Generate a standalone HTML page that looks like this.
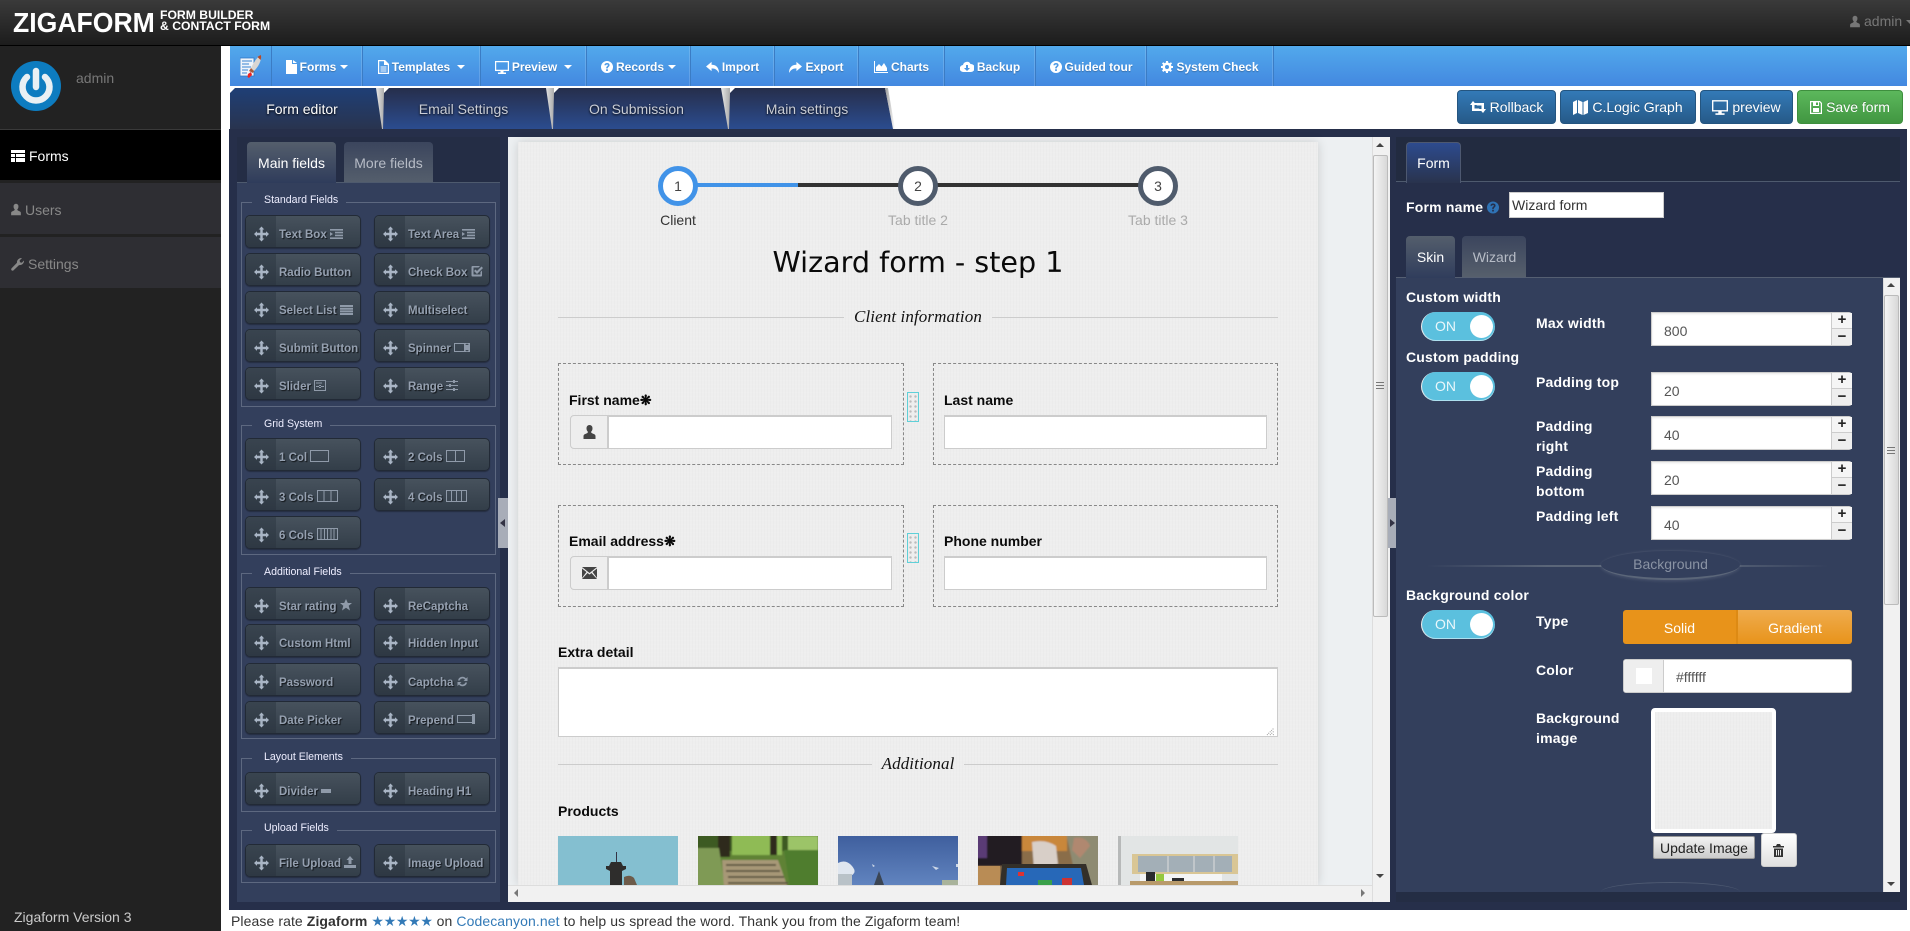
<!DOCTYPE html>
<html lang="en"><head><meta charset="utf-8"><title>Zigaform</title>
<style>
*{box-sizing:border-box}
html,body{margin:0;padding:0;width:1910px;height:931px;overflow:hidden;background:#fff;font-family:"Liberation Sans",sans-serif;font-size:14px;color:#333}
div.p{position:absolute}
svg{display:inline-block;fill:currentColor}
svg.o{fill:none;stroke:currentColor}
.t{position:absolute;white-space:nowrap;line-height:16px}
.side{position:absolute;left:0;width:221px}
.nav{position:absolute;top:46px;height:40px;padding-top:2px;display:flex;align-items:center;justify-content:center;gap:3px;color:#fff;font-weight:bold;font-size:12px;border-right:1px solid #3b7cc4;box-shadow:inset -1px 0 0 rgba(255,255,255,.15);text-shadow:0 1px 1px rgba(0,0,0,.25)}
.caret{display:inline-block;border-left:4px solid transparent;border-right:4px solid transparent;border-top:4px solid #fff;margin-left:1px}
.tab{position:absolute;top:88px;height:41px;color:#c9cdd6;text-align:center;line-height:42px;padding-right:9px;text-shadow:0 1px 2px #000;background:linear-gradient(#262e4b,#2b4c8f)}
.tb{position:absolute;top:90px;height:34px;border-radius:4px;color:#fff;display:flex;align-items:center;justify-content:center;gap:4px;background:linear-gradient(#337ab7,#265a88);border:1px solid #245580;text-shadow:0 -1px 0 rgba(0,0,0,.2)}
.tb.g{background:linear-gradient(#5cb85c,#419641);border-color:#3e8f3e}
.fs{position:absolute;left:241px;width:255px;border:1px solid #5d6880}
.lg{position:absolute;left:252px;background:#333f5c;color:#eef;font-size:10.6px;line-height:14px;padding:0 8px 0 12px;white-space:nowrap}
.b{position:absolute;width:116px;height:33px;border-radius:5px;border:1px solid #222a36;background:linear-gradient(#47525d,#333e49);box-shadow:0 1px 1px rgba(0,0,0,.3);color:#95a0b0;font-weight:bold;font-size:11.5px;line-height:33px;overflow:hidden;white-space:nowrap;text-shadow:1px 1px 1px rgba(0,0,0,.7)}
.b:before{content:"";position:absolute;left:0;top:0;bottom:0;width:30px;background:linear-gradient(#39444f,#2e3843)}
.b .m{position:absolute;left:8px;top:10px;width:15px;height:16px;color:#a9b5c5}
.b .x{position:absolute;left:33px;top:3px}
.b .x svg{vertical-align:-1px;color:#8f9aa9}
.c1{left:245px}.c2{left:374px}
.lb{position:absolute;font-weight:bold;font-size:14px;line-height:16px;color:#0a0a0a;white-space:nowrap}
.dash{position:absolute;border:1px dashed #888}
.in{position:absolute;background:#fff;border:1px solid #ccc;border-top-width:2px;height:34px}
.ad{position:absolute;background:#eee;border:1px solid #ccc;border-right-width:2px;border-radius:4px 0 0 4px;width:39px;height:34px;display:flex;align-items:center;justify-content:center;color:#444}
.hd{position:absolute;left:907px;width:12px;height:30px;border:1px solid #5fd0d8;background:radial-gradient(circle,#bbb 1px,transparent 1.4px) 0 1px/5px 5px}
.w{position:absolute;color:#fff;font-weight:bold;font-size:14px;line-height:20px;letter-spacing:.2px;white-space:nowrap}
.tg{position:absolute;left:1421px;width:74px;height:29px;border-radius:15px;background:#5bc0de;color:#eaf7fb;line-height:29px;font-size:14px;padding-left:13px;border-left:1px solid #eee;box-shadow:inset 0 -1px 0 rgba(255,255,255,.5)}
.tg:after{content:"";position:absolute;left:48px;top:3px;width:23px;height:23px;border-radius:50%;background:#fff}
.ni{position:absolute;left:1651px;width:201px;height:34px;background:#fff;border-radius:0 3px 3px 0;border:1px solid #ccc;color:#555;line-height:36px;padding-left:12px;box-shadow:inset 0 1px 2px rgba(0,0,0,.1)}
.ni i{position:absolute;left:179px;top:0;width:21px;height:16px;border-left:1px solid #ccc;border-bottom:1px solid #ccc;background:#f5f5f5;font-style:normal;color:#222;font-weight:bold;line-height:14px;text-align:center;font-size:15px;padding:0}
.ni b{position:absolute;left:179px;top:16px;width:21px;height:16px;border-left:1px solid #ccc;background:#eee;color:#222;line-height:15px;text-align:center;font-size:15px}
.sb{position:absolute;background:#f1f1f1}
.th{position:absolute;background:linear-gradient(90deg,#f4f4f4,#d8d8d8);border:1px solid #bbb;border-radius:2px}
.tex{background-color:#eee;background-image:repeating-linear-gradient(90deg,rgba(0,0,0,.01) 0 1px,transparent 1px 3px),repeating-linear-gradient(0deg,rgba(255,255,255,.06) 0 1px,transparent 1px 4px)}
.ph{position:absolute;top:836px;width:120px;height:49px;overflow:hidden}
</style></head><body>

<svg width="0" height="0" style="position:absolute">
<defs><filter id="bl" x="-5%" y="-5%" width="110%" height="110%"><feGaussianBlur stdDeviation=".9"/></filter></defs>
<symbol id="mv" viewBox="0 0 16 16"><path d="M8 0l3 3.2H9.3V6.7h3.5V5L16 8l-3.2 3V9.3H9.3v3.5H11L8 16l-3-3.2h1.7V9.3H3.2V11L0 8l3.2-3v1.7h3.500V3.200H5z"/></symbol>
<symbol id="usr" viewBox="0 0 12 16"><path d="M6 1a3 3 0 0 1 3 3.400C9 6 8.400 7 7.600 7.800c0 1 .4 1.300 2 2 1.500.6 2.400 1 2.400 2.400V15H0v-2.800c0-1.400 .9-1.800 2.400-2.400 1.600-.7 2-1 2-2C3.600 7 3 6 3 4.400A3 3 0 0 1 6 1z"/></symbol>
<symbol id="ind" viewBox="0 0 13 10"><path d="M0 0h13v1.600H0zM5 2.800h8v1.600H5zM5 5.600h8v1.600H5zM0 8.400h13V10H0zM0 3l3 2-3 2z"/></symbol>
<symbol id="lst" viewBox="0 0 13 10"><path d="M0 0h13v2H0zM0 2.700h13v2H0zM0 5.400h13v2H0zM0 8h13v2H0z"/></symbol>
<symbol id="q" viewBox="0 0 14 14"><path fill-rule="evenodd" d="M7 0a7 7 0 1 1 0 14A7 7 0 0 1 7 0zM6 9.600v2h2v-2zM7 2.400C5.200 2.400 4 3.400 4 5h2c0-.6.4-.9 1-.9s1 .3 1 .8c0 1-2 1.200-2 3.700h2c0-1.800 2-1.800 2-3.900C10 3.300 8.800 2.400 7 2.400z"/></symbol>
</svg>

<!-- Top bar -->
<div class="p" style="left:0;top:0;width:1910px;height:46px;background:linear-gradient(#3a3a3a,#1c1c1c);border-bottom:1px solid #000"></div>
<div class="t" style="left:13px;top:7px;font-size:28px;line-height:32px;font-weight:bold;color:#fff;transform:scaleX(.95);transform-origin:0 0">ZIGAFORM</div>
<div class="t" style="left:160px;top:9px;font-size:12.2px;line-height:13px;font-weight:bold;color:#fff">FORM BUILDER</div>
<div class="t" style="left:160px;top:20px;font-size:12.2px;line-height:13px;font-weight:bold;color:#fff">&amp; CONTACT FORM</div>
<svg style="position:absolute;left:1850px;top:15px;color:#777" width="10" height="13"><use href="#usr"/></svg>
<div class="t" style="left:1864px;top:13px;color:#777">admin</div>
<div class="p" style="left:1906px;top:20px;border-left:4px solid transparent;border-right:4px solid transparent;border-top:4px solid #777"></div>

<!-- Sidebar -->
<div class="side" style="top:46px;height:885px;background:#222"></div>
<div class="side" style="top:129px;height:1px;background:#3a3a3a"></div>
<svg style="position:absolute;left:11px;top:61px" width="50" height="50" viewBox="0 0 50 50"><circle cx="25" cy="25" r="25" fill="#0d7cc0"/><path d="M16 16a13.500 13.500 0 1 0 18 0" fill="none" stroke="#e9f0f4" stroke-width="6.500" stroke-linecap="round"/><path d="M25 10v16" stroke="#e9f0f4" stroke-width="6.500" stroke-linecap="round"/></svg>
<div class="t" style="left:76px;top:70px;color:#777">admin</div>
<div class="side" style="top:130px;height:50px;background:#000"></div>
<svg style="position:absolute;left:11px;top:150px;fill:#fff" width="14" height="12"><path d="M0 0h14v12H0z"/><path d="M0 3.500h14M0 7.500h14M4.500 3v9" stroke="#000" stroke-width="1"/></svg>
<div class="t" style="left:29px;top:148px;color:#fff">Forms</div>
<div class="side" style="top:183px;height:51px;background:#2e2e33"></div>
<svg style="position:absolute;left:11px;top:203px;color:#888" width="10" height="13"><use href="#usr"/></svg>
<div class="t" style="left:25px;top:202px;color:#888">Users</div>
<div class="side" style="top:237px;height:51px;background:#2e2e33"></div>
<svg style="position:absolute;left:11px;top:257px;fill:#888" width="13" height="14" viewBox="0 0 13 14"><path d="M1 13.500C0 13 0 12 .6 11.300L6 5.800C5.600 3.500 7.800.6 11 1L8.600 3.500l.4 1.800 1.800.5L13 3.500C13.300 6.500 10.600 8.500 8 8.100L2.600 13.300C2.100 13.800 1.500 13.900 1 13.500z"/></svg>
<div class="t" style="left:28px;top:256px;color:#888">Settings</div>
<div class="t" style="left:14px;top:909px;color:#ccc">Zigaform Version 3</div>

<!-- Blue nav -->
<div class="p" style="left:230px;top:46px;width:1677px;height:40px;background:linear-gradient(#52a9ec,#4388e0)"></div>
<svg style="position:absolute;left:240px;top:55px" width="22" height="23" viewBox="0 0 22 23"><path d="M0 3h14v18H0z" fill="#eef4fb" stroke="#2e76c2" stroke-width=".8"/><path d="M2 6h10M2 9h7M2 12h9M2 15h6M2 18h5" stroke="#5d9ad9" stroke-width="1.200"/><path d="M21 0c.6 5-2 11-7 16l-3-3C14 7 17 2 21 0z" fill="#d9d6d3"/><path d="M21 0c.4 2.200 0 3.800-.5 5l-3-3C18.500 1.200 19.800.4 21 0z" fill="#b24a2a"/><path d="M11 13l3 3-1 2-4-2z" fill="#a65b3d"/><path d="M8 19l3-2 1 3-3 3-1.500-1z" fill="#e22"/></svg>
<div class="p" style="left:271px;top:46px;width:1px;height:40px;background:#3b7cc4"></div>
<div class="nav" style="left:272px;width:91px"><svg width="11" height="14" viewBox="0 0 11 14"><path d="M0 0h6v4h5v10H0zM7 0l4 3H7z"/></svg><span>Forms</span><span class="caret"></span></div>
<div class="nav" style="left:363px;width:118px"><svg width="11" height="14" viewBox="0 0 11 14"><path fill-rule="evenodd" d="M0 0h7l4 4v10H0zM1.200 1.200v11.600h8.600V5H6V1.200zM2.500 6.500h6v1h-6zM2.500 8.500h6v1h-6zM2.500 10.500h6v1h-6z"/></svg><span>Templates</span><span class="caret" style="margin-left:4px"></span></div>
<div class="nav" style="left:481px;width:106px"><svg width="14" height="13" viewBox="0 0 14 13"><path fill-rule="evenodd" d="M0 0h14v10H8.500v1.500H11V13H3v-1.500h2.500V10H0zM1.200 1.200v7.600h11.600V1.200z"/></svg><span>Preview</span><span class="caret" style="margin-left:4px"></span></div>
<div class="nav" style="left:587px;width:104px"><svg width="12" height="12"><use href="#q"/></svg><span>Records</span><span class="caret"></span></div>
<div class="nav" style="left:691px;width:84px"><svg width="13" height="12" viewBox="0 0 14 13"><path d="M6 1L0 6l6 5V8c4 0 6 1.500 8 5 0-6-3-9-8-9z"/></svg><span>Import</span></div>
<div class="nav" style="left:775px;width:84px"><svg width="13" height="12" viewBox="0 0 14 13"><path d="M8 1l6 5-6 5V8C4 8 2 9.500 0 13 0 7 3 4 8 4z"/></svg><span>Export</span></div>
<div class="nav" style="left:859px;width:86px"><svg width="14" height="12" viewBox="0 0 14 12"><path d="M0 0h1v11h13v1H0zM2 10V6l3-3 2.500 2.500L10 2l3 5v3z"/></svg><span>Charts</span></div>
<div class="nav" style="left:945px;width:91px"><svg width="14" height="12" viewBox="0 0 14 12"><path fill-rule="evenodd" d="M3.500 11A3.500 3.500 0 0 1 3 4a4 4 0 0 1 7.500-1A4 4 0 0 1 11 11zM6 4v3H4l3 3 3-3H8V4z"/></svg><span>Backup</span></div>
<div class="nav" style="left:1036px;width:111px"><svg width="12" height="12"><use href="#q"/></svg><span>Guided tour</span></div>
<div class="nav" style="left:1147px;width:127px"><svg width="12" height="12" viewBox="0 0 12 12"><path fill-rule="evenodd" d="M5 0h2l.3 1.700 1.300.5L10 1.200 11 2.500 9.900 3.800l.5 1.200H12v2h-1.600l-.5 1.300L11 9.500 9.500 11 8.300 9.900 7 10.400 7 12H5l-.2-1.600-1.300-.5L2.300 11 1 9.500l1-1.200L1.600 7H0V5h1.600l.5-1.200L1 2.500 2.300 1.200 3.500 2.200l1.300-.5zM6 4a2 2 0 1 0 0 4 2 2 0 0 0 0-4z"/></svg><span>System Check</span></div>

<!-- Main tabs -->
<div class="p" style="left:230px;top:88px;width:660px;height:41px;background:linear-gradient(90deg,transparent 145px,#f0f0f0 145px,#aaa 154px,transparent 154px,transparent 314px,#f0f0f0 314px,#aaa 324px,transparent 324px,transparent 490px,#f0f0f0 490px,#aaa 500px,transparent 500px)"></div>
<div class="tab" style="left:230px;width:153px;color:#fff;background:linear-gradient(#1f3f76,#29344f);clip-path:polygon(0 5px,5px 0,146px 0,152px 41px,0 41px)">Form editor</div>
<div class="tab" style="left:383px;width:170px;clip-path:polygon(1px 5px,6px 0,163px 0,169px 41px,0 41px)">Email Settings</div>
<div class="tab" style="left:553px;width:176px;clip-path:polygon(1px 5px,6px 0,168px 0,175px 41px,0 41px)">On Submission</div>
<div class="tab" style="left:729px;width:165px;clip-path:polygon(1px 5px,6px 0,156px 0,164px 41px,0 41px)">Main settings</div>
<div class="p" style="left:885px;top:88px;width:10px;height:41px;background:linear-gradient(90deg,#999,transparent);clip-path:polygon(0 0,3px 0,10px 41px,8px 41px);z-index:0"></div>

<div class="tb" style="left:1457px;width:99px"><svg width="16" height="12" viewBox="0 0 16 12"><path d="M3 0l3.500 4H4.500v3.500H9l2.500 2.500H2V4H0zM4.500 2H14v6h2l-3 4-3.500-4h2V4.500H7z"/></svg><span>Rollback</span></div>
<div class="tb" style="left:1560px;width:136px"><svg width="15" height="15" viewBox="0 0 15 15"><path d="M0 2l4-2v13l-4 2zM5 0l4.500 2v13L5 13zM10.500 2L15 0v13l-4.500 2z"/></svg><span>C.Logic Graph</span></div>
<div class="tb" style="left:1700px;width:93px"><svg width="16" height="15" viewBox="0 0 14 13"><path fill-rule="evenodd" d="M0 0h14v10H8.500v1.500H11V13H3v-1.500h2.500V10H0zM1.200 1.200v7.600h11.600V1.200z"/></svg><span>preview</span></div>
<div class="tb g" style="left:1797px;width:106px"><svg width="12" height="13" viewBox="0 0 12 13"><path fill-rule="evenodd" d="M0 0h10l2 2v11H0zM1.200 1.200v10.600h9.600V2.600L9.800 1.200H9V5H3V1.200zM6 1.500v2.500h2V1.500zM3 7h6v4H3z"/></svg><span>Save form</span></div>

<!-- Workspace -->
<div class="p" style="left:229px;top:129px;width:1681px;height:781px;background:#262f4a"></div>
<div class="p" style="left:1907px;top:46px;width:3px;height:865px;background:#fff"></div>
<div class="p" style="left:237px;top:137px;width:263px;height:45px;background:#242d45"></div>
<div class="p" style="left:237px;top:182px;width:263px;height:720px;background:#333f5c;border-top:1px solid #4e5a6e"></div>
<div class="t" style="left:247px;top:142px;width:89px;height:41px;border-radius:4px 4px 0 0;background:linear-gradient(#545e6c,#2f3c5b);color:#fff;text-align:center;line-height:42px;z-index:1">Main fields</div>
<div class="t" style="left:344px;top:142px;width:89px;height:40px;border-radius:4px 4px 0 0;background:linear-gradient(#3b455d,#545e6c);color:#b7bcc6;text-align:center;line-height:42px">More fields</div>

<!-- Standard -->
<div class="fs" style="top:202px;height:205px"></div><div class="lg" style="top:193px">Standard Fields</div>
<div class="b c1" style="top:215px"><svg class="m"><use href="#mv"/></svg><span class="x">Text Box <svg width="13" height="10"><use href="#ind"/></svg></span></div>
<div class="b c2" style="top:215px"><svg class="m"><use href="#mv"/></svg><span class="x">Text Area <svg width="13" height="10"><use href="#ind"/></svg></span></div>
<div class="b c1" style="top:253px"><svg class="m"><use href="#mv"/></svg><span class="x">Radio Button</span></div>
<div class="b c2" style="top:253px"><svg class="m"><use href="#mv"/></svg><span class="x">Check Box <svg width="12" height="12" viewBox="0 0 12 12"><path fill-rule="evenodd" d="M1.500 1H9L7.500 2.500H2.500v7h7V7L11 5.500V10.500a1 1 0 0 1-1 1H1.500a1 1 0 0 1-1-1V2a1 1 0 0 1 1-1zM10.500 1.500L12 3 6 9 3 6l1.500-1.500L6 6z"/></svg></span></div>
<div class="b c1" style="top:291px"><svg class="m"><use href="#mv"/></svg><span class="x">Select List <svg width="13" height="10"><use href="#lst"/></svg></span></div>
<div class="b c2" style="top:291px"><svg class="m"><use href="#mv"/></svg><span class="x">Multiselect</span></div>
<div class="b c1" style="top:329px"><svg class="m"><use href="#mv"/></svg><span class="x">Submit Button</span></div>
<div class="b c2" style="top:329px"><svg class="m"><use href="#mv"/></svg><span class="x">Spinner <svg width="16" height="11" viewBox="0 0 16 11"><path fill-rule="evenodd" d="M0 1h16v9H0zM1 2v7h9V2zM11 3h4l-2-1.500zM11 8h4l-2 1.500z"/></svg></span></div>
<div class="b c1" style="top:367px"><svg class="m"><use href="#mv"/></svg><span class="x">Slider <svg width="12" height="11" viewBox="0 0 12 11"><path fill-rule="evenodd" d="M0 0h12v11H0zM1 1v9h10V1zM2 2.500h6v1H2zM2 6h8v1H2zM5 5h2v3H5z"/></svg></span></div>
<div class="b c2" style="top:367px"><svg class="m"><use href="#mv"/></svg><span class="x">Range <svg width="12" height="11" viewBox="0 0 12 11"><path d="M0 1h12v1H0zM0 5h12v1H0zM0 9h12v1H0zM7 0h2v3H7zM3 4h2v3H3zM7 8h2v3H7z"/></svg></span></div>

<!-- Grid -->
<div class="fs" style="top:425px;height:130px"></div><div class="lg" style="top:417px">Grid System</div>
<div class="b c1" style="top:438px"><svg class="m"><use href="#mv"/></svg><span class="x">1 Col <svg class="o" width="19" height="12" viewBox="0 0 19 12"><path d="M.5.500h18v11H.5z"/></svg></span></div>
<div class="b c2" style="top:438px"><svg class="m"><use href="#mv"/></svg><span class="x">2 Cols <svg class="o" width="19" height="12" viewBox="0 0 19 12"><path d="M.5.500h18v11H.5zM9.500.500v11"/></svg></span></div>
<div class="b c1" style="top:478px"><svg class="m"><use href="#mv"/></svg><span class="x">3 Cols <svg class="o" width="21" height="12" viewBox="0 0 21 12"><path d="M.5.500h20v11H.5zM7 .500v11M14 .500v11"/></svg></span></div>
<div class="b c2" style="top:478px"><svg class="m"><use href="#mv"/></svg><span class="x">4 Cols <svg class="o" width="21" height="12" viewBox="0 0 21 12"><path d="M.5.500h20v11H.5zM5.500.500v11M10.500.500v11M15.500.500v11"/></svg></span></div>
<div class="b c1" style="top:516px"><svg class="m"><use href="#mv"/></svg><span class="x">6 Cols <svg class="o" width="21" height="12" viewBox="0 0 21 12"><path d="M.5.500h20v11H.5zM4 .500v11M7.500.500v11M10.500.500v11M14 .500v11M17 .500v11"/></svg></span></div>

<!-- Additional -->
<div class="fs" style="top:573px;height:166px"></div><div class="lg" style="top:565px">Additional Fields</div>
<div class="b c1" style="top:587px"><svg class="m"><use href="#mv"/></svg><span class="x">Star rating <svg width="12" height="12" viewBox="0 0 12 12"><path d="M6 0l1.800 4H12L8.700 6.800 10 11.500 6 8.800 2 11.500 3.300 6.800 0 4h4.200z"/></svg></span></div>
<div class="b c2" style="top:587px"><svg class="m"><use href="#mv"/></svg><span class="x">ReCaptcha</span></div>
<div class="b c1" style="top:624px"><svg class="m"><use href="#mv"/></svg><span class="x">Custom Html</span></div>
<div class="b c2" style="top:624px"><svg class="m"><use href="#mv"/></svg><span class="x">Hidden Input</span></div>
<div class="b c1" style="top:663px"><svg class="m"><use href="#mv"/></svg><span class="x">Password</span></div>
<div class="b c2" style="top:663px"><svg class="m"><use href="#mv"/></svg><span class="x">Captcha <svg width="11" height="11" viewBox="0 0 11 11"><path d="M1 4.500A4.500 4.500 0 0 1 9 2.500L10.500 1v4h-4L8 3.700A3 3 0 0 0 2.700 4.500zM10 6.500A4.500 4.500 0 0 1 2 8.500L.5 10V6h4L3 7.300A3 3 0 0 0 8.300 6.500z"/></svg></span></div>
<div class="b c1" style="top:701px"><svg class="m"><use href="#mv"/></svg><span class="x">Date Picker</span></div>
<div class="b c2" style="top:701px"><svg class="m"><use href="#mv"/></svg><span class="x">Prepend <svg class="o" width="19" height="12" viewBox="0 0 19 12"><path d="M.5 2.500h16v7H.5z"/><path d="M16.500 1v10" stroke-width="3"/></svg></span></div>

<!-- Layout -->
<div class="fs" style="top:758px;height:54px"></div><div class="lg" style="top:750px">Layout Elements</div>
<div class="b c1" style="top:772px"><svg class="m"><use href="#mv"/></svg><span class="x">Divider <svg width="10" height="4" viewBox="0 0 10 4" style="vertical-align:2px"><path d="M0 0h10v4H0z"/></svg></span></div>
<div class="b c2" style="top:772px"><svg class="m"><use href="#mv"/></svg><span class="x">Heading H1</span></div>

<!-- Upload -->
<div class="fs" style="top:830px;height:53px"></div><div class="lg" style="top:821px">Upload Fields</div>
<div class="b c1" style="top:844px"><svg class="m"><use href="#mv"/></svg><span class="x">File Upload <svg width="12" height="12" viewBox="0 0 12 12"><path d="M6 0l3.500 4H7.500v4h-3V4H2.500zM0 9h12v3H0z"/></svg></span></div>
<div class="b c2" style="top:844px"><svg class="m"><use href="#mv"/></svg><span class="x">Image Upload</span></div>

<!-- Center canvas -->
<div class="p" style="left:508px;top:137px;width:882px;height:765px;background:#edf0f2"></div>
<div class="p tex" style="left:518px;top:142px;width:800px;height:743px;box-shadow:0 0 10px rgba(0,0,0,.15)"></div>
<div class="p" style="left:498px;top:498px;width:10px;height:50px;background:#a8adb8"></div>
<div class="p" style="left:500px;top:519px;border-right:5px solid #334;border-top:4px solid transparent;border-bottom:4px solid transparent"></div>

<!-- Steps -->
<div class="p" style="left:678px;top:183px;width:120px;height:4px;background:#4193e8"></div>
<div class="p" style="left:798px;top:183px;width:360px;height:4px;background:#333"></div>
<div class="t" style="left:658px;top:166px;width:40px;height:40px;border-radius:50%;border:5px solid #4193e8;background:#fff;text-align:center;line-height:30px;color:#444">1</div>
<div class="t" style="left:898px;top:166px;width:40px;height:40px;border-radius:50%;border:5px solid #4f5b6c;background:#fff;text-align:center;line-height:30px;color:#444">2</div>
<div class="t" style="left:1138px;top:166px;width:40px;height:40px;border-radius:50%;border:5px solid #4f5b6c;background:#fff;text-align:center;line-height:30px;color:#444">3</div>
<div class="t" style="left:578px;top:212px;width:200px;text-align:center;color:#333">Client</div>
<div class="t" style="left:818px;top:212px;width:200px;text-align:center;color:#aaa">Tab title 2</div>
<div class="t" style="left:1058px;top:212px;width:200px;text-align:center;color:#aaa">Tab title 3</div>
<div class="t" style="left:558px;top:244px;width:720px;text-align:center;font-family:'DejaVu Sans',sans-serif;font-size:28.6px;line-height:36px;color:#0a0a0a">Wizard form - step 1</div>

<div class="p" style="left:558px;top:317px;width:286px;height:1px;background:#ccc"></div>
<div class="p" style="left:992px;top:317px;width:286px;height:1px;background:#ccc"></div>
<div class="t" style="left:844px;top:307px;width:148px;text-align:center;font-family:'Liberation Serif',serif;font-style:italic;font-size:17px;line-height:20px;letter-spacing:.1px;color:#111">Client information</div>

<div class="dash" style="left:558px;top:363px;width:346px;height:102px"></div>
<div class="dash" style="left:933px;top:363px;width:345px;height:102px"></div>
<div class="lb" style="left:569px;top:392px">First name<span style="font-size:14px">❋</span></div>
<div class="lb" style="left:944px;top:392px">Last name</div>
<div class="in" style="left:608px;top:415px;width:284px"></div>
<div class="ad" style="left:570px;top:415px"><svg width="13" height="16"><use href="#usr"/></svg></div>
<div class="in" style="left:944px;top:415px;width:323px"></div>
<div class="hd" style="top:392px"></div>

<div class="dash" style="left:558px;top:505px;width:346px;height:102px"></div>
<div class="dash" style="left:933px;top:505px;width:345px;height:102px"></div>
<div class="lb" style="left:569px;top:533px">Email address<span style="font-size:14px">❋</span></div>
<div class="lb" style="left:944px;top:533px">Phone number</div>
<div class="in" style="left:608px;top:556px;width:284px"></div>
<div class="ad" style="left:570px;top:556px"><svg width="15" height="12" viewBox="0 0 15 12"><path d="M0 0h15L7.500 6zM0 1.500V11l4.500-6zM15 1.500V11l-4.500-6zM0 12l5.500-6L7.500 7.500 9.500 6 15 12z"/></svg></div>
<div class="in" style="left:944px;top:556px;width:323px"></div>
<div class="hd" style="top:533px"></div>

<div class="lb" style="left:558px;top:644px">Extra detail</div>
<div class="p" style="left:558px;top:667px;width:720px;height:70px;background:#fff;border:1px solid #ccc;border-top-width:2px"></div>
<svg style="position:absolute;left:1266px;top:727px;fill:none" width="9" height="9" stroke="#999" stroke-dasharray="1 1"><path d="M1 8L8 1M4 8L8 4M7 8L8 7"/></svg>

<div class="p" style="left:558px;top:764px;width:314px;height:1px;background:#ccc"></div>
<div class="p" style="left:964px;top:764px;width:314px;height:1px;background:#ccc"></div>
<div class="t" style="left:872px;top:754px;width:92px;text-align:center;font-family:'Liberation Serif',serif;font-style:italic;font-size:17px;line-height:20px;letter-spacing:.1px;color:#111">Additional</div>
<div class="lb" style="left:558px;top:803px">Products</div>

<!-- thumbs -->
<div class="ph" style="left:558px"><svg width="120" height="49" viewBox="0 0 120 49"><rect width="120" height="49" fill="#84bfd0"/><path d="M58 16h1v10h-1z" fill="#334"/><path d="M48 30h20v3l-4 2v14H52V35l-4-2zM53 26h10l2 4H51z" fill="#2e2d2c"/><path d="M66 41q6-3 10 1l3 7H66z" fill="#6d5b4a"/></svg></div>
<div class="ph" style="left:698px"><svg width="120" height="49" viewBox="0 0 120 49"><g filter="url(#bl)"><rect x="-3" y="-3" width="126" height="55" fill="#5f8236"/><path d="M-3-3h126v18H-3z" fill="#3d5a24"/><path d="M34-3h50v22H34z" fill="#8fbb55"/><path d="M90 0h30v14H90z" fill="#9cc468"/><path d="M20-3h12v24H20zM72-3h7v22h-7z" fill="#2f2a1c"/><path d="M-3 12h24l6 40H-3z" fill="#7f9a55"/><path d="M86 14h37v38H92z" fill="#4f7d2e"/><path d="M24 24h56l10 28H26z" fill="#a79877"/><path d="M28 29h50M28 35h54M30 41h56M30 47h60" stroke="#5b5140" stroke-width="1.800"/></g></svg></div>
<div class="ph" style="left:838px"><svg width="120" height="49" viewBox="0 0 120 49"><defs><linearGradient id="s3" x1="0" y1="0" x2="0" y2="1"><stop offset="0" stop-color="#3f5f9e"/><stop offset="1" stop-color="#6184bf"/></linearGradient></defs><rect width="120" height="49" fill="url(#s3)"/><path d="M0 27q8-4 14 3t-2 10H0z" fill="#dfe6ef"/><path d="M0 38h14v11H0z" fill="#b9c2c8"/><path d="M36 49l5-14 5 14z" fill="#3b4553"/><path d="M104 44h16v5h-16z" fill="#a9b39b"/><path d="M34 28l3 2-2 1zM94 30l7 2-3 2zM118 28h2v3h-2z" fill="#cdd8e8"/></svg></div>
<div class="ph" style="left:978px"><svg width="120" height="49" viewBox="0 0 120 49"><g filter="url(#bl)"><rect x="-3" y="-3" width="126" height="55" fill="#8a6d4a"/><path d="M-3-3h47v33H-3z" fill="#221a22"/><path d="M-3-3h12v25H-3z" fill="#5a3a74"/><path d="M44-3h45v18H44z" fill="#c9873a"/><path d="M54 6q14-3 24 4l2 18-24 6z" fill="#d8cfc8"/><path d="M88-3h35v55H100z" fill="#8e8b72"/><path d="M96 2q12-2 16 8l-10 12-8-8z" fill="#b08870"/></g><path d="M24 28h84l6 21H22z" fill="#332f29"/><path d="M29 32h74l3 17H28z" fill="#2768b8"/><path d="M40 36h6v4h-6z" fill="#d33"/><path d="M60 44h14v5H60z" fill="#3aa04a"/><path d="M84 42h10v7H84z" fill="#c33"/><path d="M0 30h22v19H0z" fill="#b98c55"/></svg></div>
<div class="ph" style="left:1118px"><svg width="120" height="49" viewBox="0 0 120 49"><rect width="120" height="49" fill="#e2e5e5"/><path d="M0 0h3v49H0z" fill="#b7b9b9"/><path d="M14 18h106v20H14z" fill="#d9c695"/><path d="M20 20h94v16H20z" fill="#a3afb7"/><path d="M50 20v16M76 20v16M96 20v16" stroke="#dcdcdc"/><path d="M22 38h82v11H22z" fill="#f4f5f5"/><path d="M28 36h9v9h-9z" fill="#2a2c2e"/><path d="M38 38h8v8h-8z" fill="#94c83e"/><path d="M54 42h12v7H54z" fill="#2a2c2e"/><path d="M12 45h108v4H12z" fill="#b89a6a"/></svg></div>

<!-- Center scrollbars -->
<div class="sb" style="left:508px;top:885px;width:864px;height:17px;border-top:1px solid #ddd"></div>
<div class="p" style="left:514px;top:889px;border-right:4px solid #777;border-top:4px solid transparent;border-bottom:4px solid transparent"></div>
<div class="p" style="left:1361px;top:889px;border-left:4px solid #777;border-top:4px solid transparent;border-bottom:4px solid transparent"></div>
<div class="sb" style="left:1372px;top:137px;width:18px;height:765px;border-left:1px solid #ddd"></div>
<div class="p" style="left:1376px;top:143px;border-left:4px solid transparent;border-right:4px solid transparent;border-bottom:4px solid #444"></div>
<div class="th" style="left:1373px;top:155px;width:15px;height:462px"></div>
<div class="p" style="left:1376px;top:382px;width:8px;height:7px;border-top:1px solid #777;border-bottom:1px solid #777;background:linear-gradient(#777,#777) 0 2px/8px 1px no-repeat"></div>
<div class="p" style="left:1376px;top:874px;border-left:4px solid transparent;border-right:4px solid transparent;border-top:4px solid #444"></div>

<div class="p" style="left:1388px;top:498px;width:9px;height:50px;background:#a8adb8"></div>
<div class="p" style="left:1390px;top:519px;border-left:5px solid #334;border-top:4px solid transparent;border-bottom:4px solid transparent"></div>

<!-- Right panel -->
<div class="p" style="left:1396px;top:137px;width:504px;height:45px;background:#222b40;border-bottom:1px solid #4e5a6e"></div>
<div class="t" style="left:1406px;top:142px;width:55px;height:41px;border:1px solid #4d5870;border-bottom:0;border-radius:4px 4px 0 0;background:linear-gradient(#2d4b8e,#29334d);color:#fff;text-align:center;line-height:41px">Form</div>
<div class="w" style="left:1406px;top:197px">Form name</div>
<svg style="position:absolute;left:1487px;top:201px;color:#2f73b5" width="12" height="13"><use href="#q"/></svg>
<div class="t" style="left:1509px;top:192px;width:155px;height:26px;background:#fff;border:1px solid #ccc;color:#333;line-height:24px;padding-left:2px">Wizard form</div>

<div class="p" style="left:1396px;top:277px;width:504px;height:615px;background:#333f5c;border-top:1px solid #555f72"></div>
<div class="t" style="left:1406px;top:236px;width:49px;height:42px;border-radius:4px 4px 0 0;background:linear-gradient(#545e6c,#303d5c);color:#fff;text-align:center;line-height:42px;z-index:1">Skin</div>
<div class="t" style="left:1462px;top:236px;width:64px;height:41px;border-radius:4px 4px 0 0;background:linear-gradient(#3b455d,#565f6c);color:#b7bcc6;text-align:center;line-height:42px;z-index:1;padding-left:1px">Wizard</div>
<div class="p" style="left:1396px;top:892px;width:504px;height:10px;background:#242d44"></div>

<div class="sb" style="left:1883px;top:278px;width:17px;height:614px;border-left:1px solid #ddd"></div>
<div class="p" style="left:1887px;top:283px;border-left:4px solid transparent;border-right:4px solid transparent;border-bottom:4px solid #444"></div>
<div class="th" style="left:1884px;top:295px;width:15px;height:310px"></div>
<div class="p" style="left:1887px;top:447px;width:8px;height:7px;border-top:1px solid #777;border-bottom:1px solid #777;background:linear-gradient(#777,#777) 0 2px/8px 1px no-repeat"></div>
<div class="p" style="left:1887px;top:882px;border-left:4px solid transparent;border-right:4px solid transparent;border-top:4px solid #444"></div>

<div class="w" style="left:1406px;top:287px">Custom width</div>
<div class="tg" style="top:312px">ON</div>
<div class="w" style="left:1536px;top:313px">Max width</div>
<div class="ni" style="top:312px">800<i>+</i><b>−</b></div>
<div class="w" style="left:1406px;top:347px">Custom padding</div>
<div class="tg" style="top:372px">ON</div>
<div class="w" style="left:1536px;top:372px">Padding top</div>
<div class="ni" style="top:372px">20<i>+</i><b>−</b></div>
<div class="w" style="left:1536px;top:416px">Padding</div>
<div class="w" style="left:1536px;top:436px">right</div>
<div class="ni" style="top:416px">40<i>+</i><b>−</b></div>
<div class="w" style="left:1536px;top:461px">Padding</div>
<div class="w" style="left:1536px;top:481px">bottom</div>
<div class="ni" style="top:461px">20<i>+</i><b>−</b></div>
<div class="w" style="left:1536px;top:506px">Padding left</div>
<div class="ni" style="top:506px">40<i>+</i><b>−</b></div>

<div class="p" style="left:1427px;top:565px;width:401px;height:2px;background:linear-gradient(90deg,transparent,#5b6679 30%,#5b6679 70%,transparent)"></div>
<div class="t" style="left:1601px;top:550px;width:139px;height:30px;border-radius:50%;background:#333f5c;border-bottom:2px solid #5b6679;border-top:1px solid #3f4a65;box-shadow:0 1px 3px rgba(255,255,255,.12);text-align:center;line-height:26px;color:#8a93a4">Background</div>

<div class="w" style="left:1406px;top:585px">Background color</div>
<div class="tg" style="top:610px">ON</div>
<div class="w" style="left:1536px;top:611px">Type</div>
<div class="t" style="left:1623px;top:610px;width:115px;height:34px;background:#e8931a;border-radius:3px 0 0 3px;color:#fff;text-align:center;line-height:36px;border-right:2px solid #dd8a14">Solid</div>
<div class="t" style="left:1738px;top:610px;width:114px;height:34px;background:linear-gradient(#efac4e,#e8931a);border-radius:0 3px 3px 0;color:#fff;text-align:center;line-height:36px">Gradient</div>
<div class="w" style="left:1536px;top:660px">Color</div>
<div class="t" style="left:1623px;top:659px;width:229px;height:34px;background:#fff;border:1px solid #ccc;border-radius:3px;color:#555;line-height:34px;padding-left:52px">#ffffff</div>
<div class="p" style="left:1624px;top:660px;width:40px;height:32px;background:#eee;border-right:1px solid #ccc;border-radius:3px 0 0 3px"></div>
<div class="p" style="left:1636px;top:668px;width:16px;height:16px;background:#fff"></div>
<div class="w" style="left:1536px;top:708px">Background</div>
<div class="w" style="left:1536px;top:728px">image</div>
<div class="p tex" style="left:1651px;top:708px;width:125px;height:125px;border:4px solid #fff;border-radius:4px"></div>
<div class="t" style="left:1653px;top:836px;width:102px;height:23px;border:1px solid #999;border-radius:2px;background:linear-gradient(#f2f2f2,#ccc);color:#222;text-align:center;line-height:23px">Update Image</div>
<div class="p" style="left:1761px;top:833px;width:36px;height:34px;border:1px solid #ccc;border-radius:3px;background:linear-gradient(#fff,#e0e0e0)"></div>
<svg style="position:absolute;left:1773px;top:844px;fill:#333" width="11" height="13" viewBox="0 0 11 13"><path fill-rule="evenodd" d="M4 0h3l1 2h3v1.500H0V2h3zM1 4.500h9V13H1zM3 6v5.500h1V6zM5 6v5.500h1V6zM7 6v5.500h1V6z"/></svg>
<div class="p" style="left:1601px;top:882px;width:139px;height:10px;border-radius:70px/10px 10px 0 0;border-top:1px solid #4e5a72;overflow:hidden"></div>

<!-- Footer -->
<div class="t" style="left:231px;top:913px;color:#333;letter-spacing:.09px">Please rate <b>Zigaform</b> <span style="color:#337ab7;letter-spacing:-.3px">★★★★★</span> on <span style="color:#337ab7">Codecanyon.net</span> to help us spread the word. Thank you from the Zigaform team!</div>
</body></html>
